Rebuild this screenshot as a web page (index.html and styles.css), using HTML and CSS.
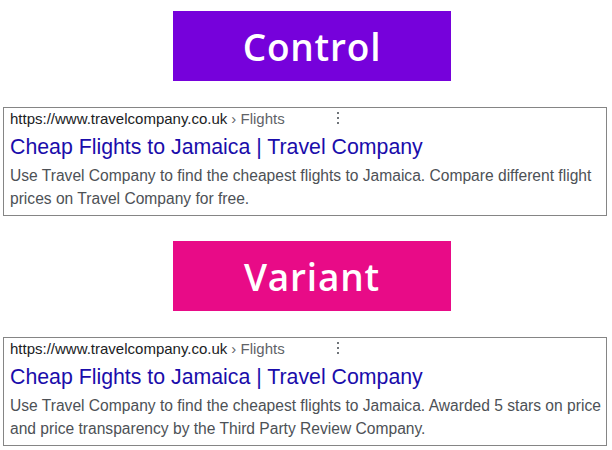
FILE: index.html
```html
<!DOCTYPE html>
<html lang="en">
<head>
    <meta charset="UTF-8">
    <meta name="viewport" content="width=device-width, initial-scale=1.0">
    <title>Control vs Variant</title>
    <link rel="stylesheet" href="styles.css">
</head>
<body>
    <main class="page">
        <section class="test">
            <h2 class="label label-control">Control</h2>
            <div class="result">
                <div class="result-url">
                    <span class="domain">https://www.travelcompany.co.uk</span>
                    <span class="crumb">› Flights</span>
                    <span class="more"><i></i><i></i><i></i></span>
                </div>
                <a class="result-title" href="#">Cheap Flights to Jamaica | Travel Company</a>
                <p class="result-desc">Use Travel Company to find the cheapest flights to Jamaica. Compare different flight prices on Travel Company for free.</p>
            </div>
        </section>

        <section class="test">
            <h2 class="label label-variant">Variant</h2>
            <div class="result">
                <div class="result-url">
                    <span class="domain">https://www.travelcompany.co.uk</span>
                    <span class="crumb">› Flights</span>
                    <span class="more"><i></i><i></i><i></i></span>
                </div>
                <a class="result-title" href="#">Cheap Flights to Jamaica | Travel Company</a>
                <p class="result-desc">Use Travel Company to find the cheapest flights to Jamaica. Awarded 5 stars on price and price transparency by the Third Party Review Company.</p>
            </div>
        </section>
    </main>
</body>
</html>
```

FILE: styles.css
```css
body {
    margin: 0;
    background: #fff;
    font-family: "Liberation Sans", Arial, sans-serif;
}

.page {
    width: 612px;
    padding-top: 11px;
    display: flex;
    flex-direction: column;
    gap: 25px;
}

.test {
    display: flex;
    flex-direction: column;
    gap: 26px;
}

.label {
    margin: 0 0 0 173px;
    width: 278px;
    height: 70px;
    display: flex;
    align-items: center;
    justify-content: center;
    font-family: "Open Sans", sans-serif;
    font-weight: 600;
    font-size: 37px;
    letter-spacing: 0.8px;
    color: #fff;
}

.label-control {
    background: #7601db;
}

.label-variant {
    background: #e80b87;
}

.result {
    margin-left: 3px;
    height: 107px;
    border: 1px solid #858585;
    padding: 0 0 0 6px;
    width: 596px;
}

.result-url {
    display: flex;
    align-items: center;
    height: 20px;
    font-size: 15px;
    color: #202124;
}

.crumb {
    margin-left: 4px;
    color: #5f6368;
}

/* menu de tres puntos */
.more {
    display: flex;
    flex-direction: column;
    gap: 3px;
    margin-left: 52px;
}

.more i {
    width: 2px;
    height: 2px;
    background: #70757a;
}

.result-title {
    display: block;
    margin-top: 6px;
    font-size: 21.3px;
    line-height: 26px;
    color: #1a0dab;
    text-decoration: none;
}

.result-desc {
    margin: 4px 0 0;
    font-size: 15.6px;
    line-height: 23px;
    color: #4d5156;
}
```
